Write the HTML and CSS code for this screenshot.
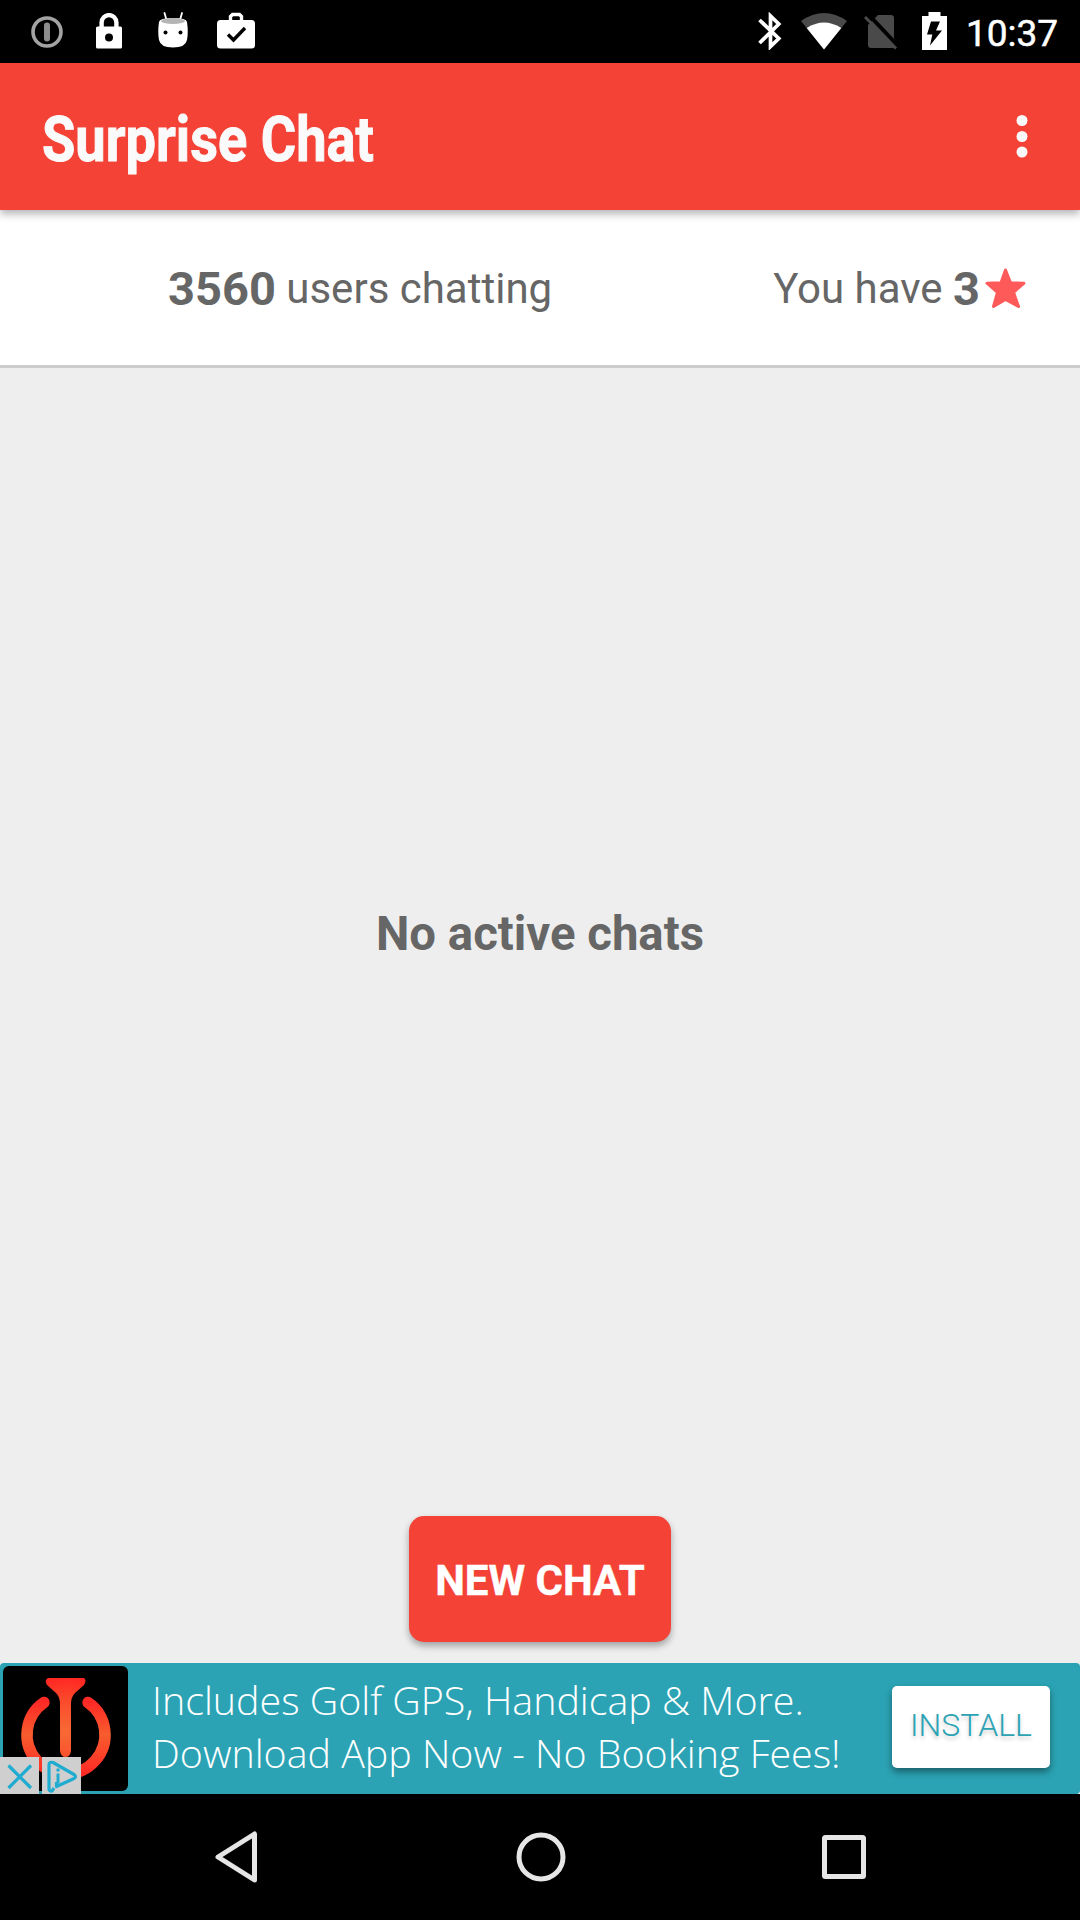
FILE: index.html
```html
<!DOCTYPE html>
<html lang="en">
<head>
<meta charset="utf-8">
<title>Surprise Chat</title>
<link rel="stylesheet" href="styles.css">
</head>
<body>
<div class="status">
  <div class="status-left">
    <svg width="32" height="32" viewBox="0 0 32 32"><circle cx="16" cy="16" r="14" fill="none" stroke="#a3a3a3" stroke-width="3.6"/><path d="M16 9.500v13" stroke="#8c8c8c" stroke-width="6" stroke-linecap="round"/></svg>
    <svg width="26" height="36" viewBox="0 0 26 36"><path d="M5.600 15V9.500a7.400 7.400 0 0 1 14.800 0V15" fill="none" stroke="#fff" stroke-width="4.400"/><path fill="#fff" fill-rule="evenodd" d="M1.500 13.500h23a1.500 1.500 0 0 1 1.500 1.500v19a1.500 1.500 0 0 1-1.500 1.500h-23A1.500 1.500 0 0 1 0 34V15a1.500 1.500 0 0 1 1.500-1.500zM13 20.500a4 4 0 1 0 0 8 4 4 0 0 0 0-8z"/></svg>
    <svg width="30" height="36" viewBox="0 0 30 36"><path d="M6.500 1l2 7M24 1l-2 7" stroke="#fff" stroke-width="1.800" stroke-linecap="round"/><path d="M1 10Q-.5 20 1 28q1.500 7.500 14 7.500T29 28q1.500-8 0-18-.5-4-14-4T1 10z" fill="#fff"/><ellipse cx="15" cy="9" rx="12" ry="3" fill="#b5b5b5"/><circle cx="7.500" cy="20.500" r="2" fill="#000"/><circle cx="22.500" cy="20.500" r="2" fill="#000"/></svg>
    <svg width="38" height="37" viewBox="0 0 38 37"><path d="M13.500 9V4.500l2-2h7l2 2V9" fill="none" stroke="#fff" stroke-width="3.400"/><rect y="8" width="38" height="28.500" rx="3.500" fill="#fff"/><path d="M11 22.500l5.500 5.500L28 16" fill="none" stroke="#000" stroke-width="3.400"/></svg>
  </div>
  <div class="status-right">
    <svg width="24" height="38" viewBox="0 0 24 38"><path d="M1.500 8l19.300 18.500-8.300 8V4l8.300 8L1.500 31" fill="none" stroke="#fff" stroke-width="3.700"/></svg>
    <svg class="wifi" width="46" height="38" viewBox="0 0 46 38"><path d="M0 9Q23-7 46 9L23 37.500z" fill="#4a4a4a"/><path d="M5.700 16Q23 5 40.300 16L23 37.500z" fill="#fff"/></svg>
    <svg class="sim" width="34" height="38" viewBox="0 0 34 38"><path d="M14 3h13a3 3 0 0 1 3 3v30H7a3 3 0 0 1-3-3V13z" fill="#4a4a4a"/><path d="M4 2l30 32" stroke="#000" stroke-width="4"/><path d="M1 5l31 31.500" stroke="#4a4a4a" stroke-width="3"/></svg>
    <svg class="bat" width="25" height="38" viewBox="0 0 25 38"><path d="M0 4h6.500V0h12v4H25v34H0z" fill="#fff"/><path d="M9 9.500h9l-4 9h6L8 33.500l2.300-11H5z" fill="#000"/></svg>
    <span class="clock">10:37</span>
  </div>
</div>
<header class="appbar">
  <h1>Surprise Chat</h1>
  <svg width="12" height="44" viewBox="0 0 12 44"><g fill="#fafafa"><circle cx="6" cy="5.500" r="5.500"/><circle cx="6" cy="21.500" r="5.500"/><circle cx="6" cy="37" r="5.500"/></g></svg>
</header>
<div class="stats">
  <div class="users"><b>3560</b> users chatting</div>
  <div class="stars"><span>You have <b>3</b></span><svg width="41" height="41" viewBox="0 0 41 41"><path d="M20.500 2l5 12.800L39 15.200 28.500 24.300 33.500 38.500 20.500 31.500 8.500 38.500 12.500 24.300 2 15.200l14-.4z" fill="#ff5a5a" stroke="#ff5a5a" stroke-width="3" stroke-linejoin="round"/></svg></div>
</div>
<main class="content">
  <p class="empty">No active chats</p>
  <button class="new">NEW CHAT</button>
</main>
<aside class="ad">
  <div class="logo">
    <svg width="125" height="125" viewBox="0 0 125 125">
      <defs>
        <radialGradient id="flame" gradientUnits="userSpaceOnUse" cx="62" cy="66" r="58"><stop offset="0" stop-color="#f76a35"/><stop offset=".55" stop-color="#fb4a2c"/><stop offset="1" stop-color="#ff2222"/></radialGradient>
        <linearGradient id="ring" x1="0" y1="0" x2="0" y2="1"><stop offset="0" stop-color="#ff2a25"/><stop offset=".45" stop-color="#f75c2e"/><stop offset="1" stop-color="#ff2a25"/></linearGradient>
      </defs>
      <rect width="125" height="125" rx="6" fill="#000"/>
      <path d="M45 12h36q3 2 0 7l-9 8q-4 4-4 11v47q-1 6-5.500 6T57 85V38q0-7-4-11l-9-8q-3-5 1-7z" fill="url(#flame)"/>
      <path d="M41 36.500A39 39 0 1 0 85 36.500" fill="none" stroke="url(#ring)" stroke-width="11.500" stroke-linecap="round"/>
    </svg>
  </div>
  <div class="badges">
    <span class="badge"><svg width="39" height="37" viewBox="0 0 39 37"><path d="M8.500 8.500l22.500 22.500M31 8.500l-22.500 22.500" stroke="#20acd0" stroke-width="3.200"/></svg></span>
    <span class="badge"><svg width="39" height="37" viewBox="0 0 39 37"><path d="M12 31l-2 3q-3 .5-3-2V8q0-3.500 4-2.500l21 12q3 2 0 4L14.500 29.500V25" fill="none" stroke="#20acd0" stroke-width="3.200" stroke-linejoin="round"/><path d="M16 16.500v10" stroke="#20acd0" stroke-width="3"/><circle cx="16" cy="13" r="1.800" fill="#20acd0"/></svg></span>
  </div>
  <p class="pitch">Includes Golf GPS, Handicap &amp; More.<br>Download App Now - No Booking Fees!</p>
  <button class="install">INSTALL</button>
</aside>
<nav class="nav">
  <svg width="44" height="52" viewBox="0 0 44 52"><path d="M3 26L39.500 3v46z" fill="none" stroke="#e6e6e6" stroke-width="5" stroke-linejoin="round"/></svg>
  <svg width="50" height="50" viewBox="0 0 50 50"><circle cx="25" cy="25" r="22" fill="none" stroke="#e6e6e6" stroke-width="5"/></svg>
  <svg width="44" height="44" viewBox="0 0 44 44"><rect x="2.500" y="2.500" width="39" height="39" rx="1" fill="none" stroke="#e6e6e6" stroke-width="5"/></svg>
</nav>
</body>
</html>
```
FILE: styles.css
```css
* { box-sizing: border-box; }
body {
  margin: 0;
  width: 1080px;
  height: 1920px;
  display: flex;
  flex-direction: column;
  overflow: hidden;
  background: #eee;
  font-family: Roboto, "Liberation Sans", sans-serif;
  color: #666;
}
svg { display: block; flex: none; }
h1, p { margin: 0; }
button { border: 0; padding: 0; font-family: inherit; }
.status {
  height: 63px;
  flex: none;
  background: #000;
  display: flex;
  justify-content: space-between;
  align-items: flex-start;
  padding: 12px 20px 0 31px;
}
.status-left { display: flex; align-items: flex-end; height: 37px; }
.status-left svg:nth-child(1) { margin-bottom: 1px; }
.status-left svg:nth-child(2) { margin-left: 33px; }
.status-left svg:nth-child(3) { margin-left: 36px; margin-bottom: 1px; }
.status-left svg:nth-child(4) { margin-left: 29px; }
.status-right { display: flex; align-items: flex-start; }
.wifi { margin-left: 19px; }
.sim { margin-left: 17px; }
.bat { margin-left: 24px; }
.clock {
  margin-left: 19px;
  width: 94px;
  font-size: 37px;
  line-height: 43px;
  color: #fff;
  white-space: nowrap;
  -webkit-text-stroke: .5px #fff;
}
.appbar {
  height: 147px;
  flex: none;
  background: #f44336;
  display: flex;
  justify-content: space-between;
  align-items: flex-start;
  padding: 52px 52px 0 42px;
  position: relative;
  box-shadow: 0 4px 8px rgba(0, 0, 0, .3);
}
h1 {
  margin-top: -12px;
  font-size: 63px;
  line-height: 74px;
  font-weight: 700;
  color: #fafafa;
  white-space: nowrap;
  transform-origin: 0 0;
  transform: scaleX(.86);
  -webkit-text-stroke: 1px #fafafa;
}
.stats {
  height: 158px;
  flex: none;
  background: #fff;
  border-bottom: 3px solid #ccc;
  display: flex;
  justify-content: space-between;
  align-items: center;
  padding: 2px 54px 0 168px;
  font-size: 42px;
  white-space: nowrap;
}
.stats b { font-size: 47px; vertical-align: -2px; }
.stars { display: flex; align-items: center; gap: 5px; }
.content {
  flex: 1;
  display: flex;
  flex-direction: column;
  align-items: center;
  justify-content: space-between;
  padding: 538px 0 21px;
}
.empty { font-size: 47.300px; line-height: 56px; font-weight: 700; }
.new {
  width: 262px;
  height: 126px;
  border-radius: 15px;
  background: #f44336;
  color: #fff;
  font-size: 42px;
  font-weight: 700;
  padding-top: 2px;
  -webkit-text-stroke: .4px #fff;
  box-shadow: 0 4px 7px rgba(0, 0, 0, .32);
}
.ad {
  position: relative;
  height: 131px;
  flex: none;
  background: #2ba3b4;
  border-radius: 4px;
  display: flex;
  align-items: flex-start;
  padding: 3px 30px 0 3px;
}
.badges {
  position: absolute;
  left: 0;
  bottom: 0;
  display: flex;
  gap: 3px;
}
.badge { background: #cfcfcf; }
.pitch {
  margin: 8px 0 0 24px;
  width: 730px;
  font-family: "Open Sans", "Noto Sans", sans-serif;
  font-weight: 300;
  font-size: 39.400px;
  line-height: 52.500px;
  color: #fff;
  white-space: nowrap;
}
.install {
  margin: 20px 0 0 auto;
  width: 158px;
  height: 82px;
  flex: none;
  border-radius: 5px;
  background: #fff;
  color: #2ba3b4;
  font-size: 32px;
  font-weight: 300;
  padding-bottom: 4px;
  text-shadow: 0 3px 4px rgba(0, 0, 0, .2);
  box-shadow: 0 4px 7px rgba(0, 0, 0, .4);
}
.nav {
  height: 126px;
  flex: none;
  background: #000;
  display: flex;
  justify-content: space-between;
  align-items: center;
  padding: 0 214px 0 215px;
}
```
